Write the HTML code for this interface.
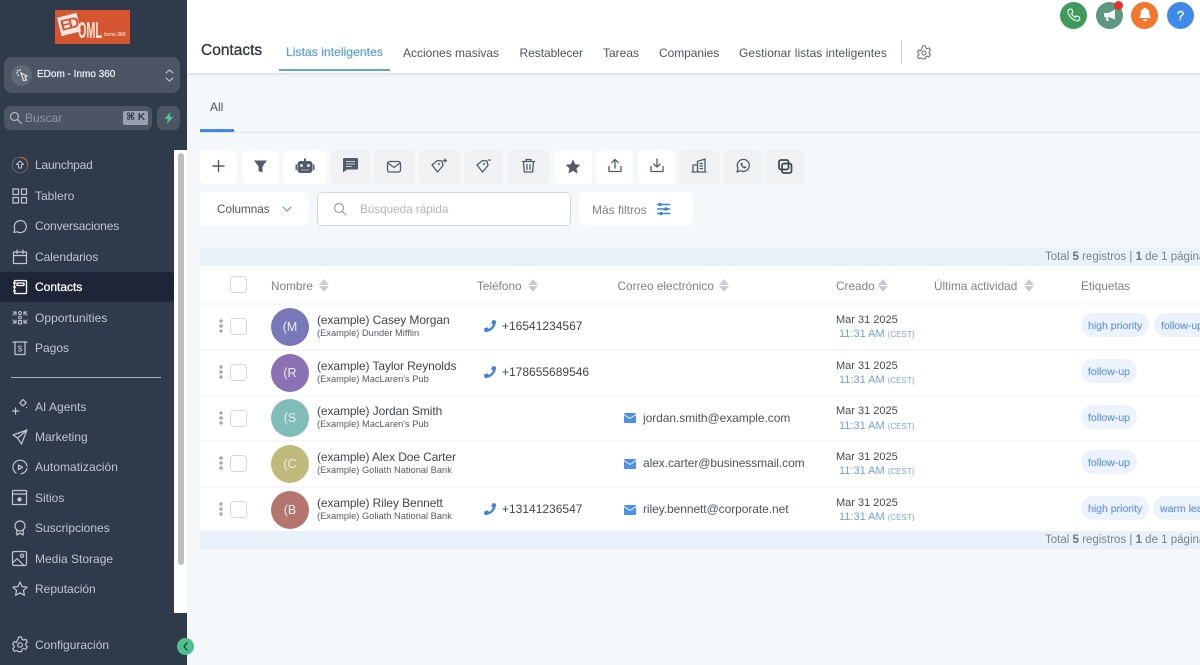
<!DOCTYPE html>
<html lang="es"><head><meta charset="utf-8"><title>Contacts</title>
<style>
*{box-sizing:border-box}
html,body{margin:0;padding:0;width:1200px;height:665px;overflow:hidden;background:#f4f8fb;font-family:"Liberation Sans",sans-serif;color:#374151}
.a{position:absolute;white-space:nowrap}
.nav{position:absolute;left:35px;font-size:12px;line-height:16px;color:#bfc6d0;white-space:nowrap}
svg{position:absolute;overflow:visible}
.si{fill:none;stroke:#bfc6d0;stroke-width:1.2;stroke-linecap:round;stroke-linejoin:round}
.tab{position:absolute;top:45px;font-size:12px;line-height:16px;color:#4b5563;white-space:nowrap}
.tb{position:absolute;top:150px;height:34px;border-radius:5px;background:#fff}
.tb.g{background:#eff1f3}
.tb svg{left:0;top:0}
.ic{fill:none;stroke:#525c68;stroke-width:1.3;stroke-linecap:round;stroke-linejoin:round}
.icf{fill:#525c68;stroke:none}
.row{position:absolute;left:200px;width:1000px;background:#fff;height:44px}
.cb{position:absolute;left:230px;width:17px;height:17px;border:1px solid #d5d9de;border-radius:4px;background:#fff}
.dots{position:absolute;left:219px;width:4px;height:14px;background:radial-gradient(circle at 2px 2px,#a8adb3 1.6px,transparent 2px),radial-gradient(circle at 2px 7px,#a8adb3 1.6px,transparent 2px),radial-gradient(circle at 2px 12px,#a8adb3 1.6px,transparent 2px)}
.av{position:absolute;left:271px;width:38px;height:38px;border-radius:50%;color:#e9ecf2;font-size:12.5px;line-height:38px;text-align:center}
.n{position:absolute;left:317px;font-size:12px;line-height:14px;color:#3f4650;white-space:nowrap;letter-spacing:-.1px}
.c{position:absolute;left:317px;font-size:9.3px;line-height:11px;color:#555c66;white-space:nowrap}
.ph{position:absolute;left:502px;font-size:12px;line-height:14px;color:#3f4650;white-space:nowrap}
.em{position:absolute;left:643px;font-size:12px;line-height:14px;color:#4b5260;white-space:nowrap;letter-spacing:-.07px}
.d{position:absolute;left:836px;font-size:11px;line-height:12px;color:#444b55;white-space:nowrap}
.t{position:absolute;left:839px;font-size:11px;line-height:13px;color:#6fa0e0;white-space:nowrap}
.t small{font-size:8px;color:#7da7df}
.tag{position:absolute;height:24px;border-radius:12px;background:#edf3fc;color:#6a9be0;font-size:10.5px;line-height:26px;padding:0 7px;white-space:nowrap;-webkit-text-stroke:.2px #6a9be0}
.th{position:absolute;top:279px;font-size:11.8px;line-height:14px;color:#7b828c;white-space:nowrap}
.sort{position:absolute;top:279px;width:10px;height:13px}
.sort:before,.sort:after{content:"";position:absolute;left:0;border-left:5px solid transparent;border-right:5px solid transparent}
.sort:before{top:0;border-bottom:6px solid #c9ccd1}
.sort:after{bottom:0;border-top:6px solid #c9ccd1}
.tot{position:absolute;left:1045px;font-size:11.5px;line-height:14px;color:#7b828c;white-space:nowrap}
.tot b{color:#6b7280}
</style></head><body>

<!-- sidebar -->
<div class="a" style="left:0;top:0;width:187px;height:665px;background:#2f3a4b"></div>
<div class="a" style="left:174px;top:150px;width:13px;height:463px;background:#fff"></div>
<div class="a" style="left:178px;top:153px;width:6px;height:412px;background:#bcbfc0;border-radius:3px"></div>

<!-- logo -->
<div class="a" style="left:55px;top:10px;width:75px;height:34px;background:#d4552f;overflow:hidden">
 <div class="a" style="left:4px;top:5px;width:20px;height:19px;background:#f4e8e0;transform:rotate(-14deg);color:#d4552f;font:700 15px/19px 'Liberation Sans';letter-spacing:-2px;text-align:center">ED</div>
 <div class="a" style="left:23px;top:8px;color:#f6e6dc;font:700 23px/24px 'Liberation Sans';transform:scaleX(.47);transform-origin:left">OML</div>
 <div class="a" style="left:49px;top:22px;color:#f1c8b5;font:700 5.5px/7px 'Liberation Sans';letter-spacing:-.3px">Inmo 360</div>
</div>

<!-- account -->
<div class="a" style="left:4px;top:57px;width:176px;height:36px;border-radius:8px;background:#4b5564"></div>
<div class="a" style="left:11px;top:65px;width:21px;height:21px;border-radius:50%;background:#5f6875"></div>
<svg style="left:16px;top:69px" width="12" height="13" viewBox="0 0 12 13"><path d="M5 4l6 3-2 1 1.500 3-3 .5L5 4zM1 1l1.500 1.500M4 0v2M0 4h2M1.500 7L3 5.800" fill="none" stroke="#e8eaee" stroke-width="1.100"/></svg>
<div class="a" style="left:37px;top:67px;font-size:10px;line-height:15px;color:#eceff3;-webkit-text-stroke:.25px #eceff3">EDom - Inmo 360</div>
<svg style="left:164px;top:68px" width="11" height="15" viewBox="0 0 11 15"><path d="M2 5l3.500-3L9 5M2 10l3.500 3L9 10" fill="none" stroke="#c3cad4" stroke-width="1.100" stroke-linecap="round"/></svg>

<!-- search -->
<div class="a" style="left:4px;top:106px;width:148px;height:24px;border-radius:6px;background:#4b5564"></div>
<svg style="left:9px;top:111px" width="14" height="14" viewBox="0 0 14 14"><circle cx="5.500" cy="5.500" r="4" fill="none" stroke="#aab1bb" stroke-width="1.300"/><path d="M8.500 8.500L12.500 12.500" stroke="#aab1bb" stroke-width="1.300" stroke-linecap="round"/></svg>
<div class="a" style="left:25px;top:110px;font-size:12px;line-height:16px;color:#8f97a3">Buscar</div>
<div class="a" style="left:123px;top:111px;width:25px;height:14px;background:#99a1ac;border-radius:2px;color:#2f3a4b;font-size:10px;line-height:14px;text-align:center;font-weight:700;font-family:'Liberation Sans','DejaVu Sans',sans-serif;">⌘ K</div>
<div class="a" style="left:157px;top:106px;width:23px;height:24px;border-radius:6px;background:#4b5564"></div>
<svg style="left:163px;top:112px" width="12" height="12" viewBox="0 0 12 12"><path d="M7.500 0L1.500 7h3.500L3.800 12 10.500 4.800H6.800z" fill="#4fc78f"/></svg>

<!-- nav active -->
<div class="a" style="left:0;top:272px;width:174px;height:30px;background:#1e2536;border-radius:0 4px 4px 0"></div>

<!-- nav icons -->
<svg style="left:11px;top:156px" width="18" height="18" viewBox="0 0 18 18"><circle cx="9" cy="9" r="7.800" fill="none" stroke="#5e6776" stroke-width="1"/><path d="M9 1.200A7.800 7.800 0 0 1 16.800 9" fill="none" stroke="#c4713f" stroke-width="1"/><path class="si" d="M9 5L5.500 8.500H7.500V12H10.500V8.500H12.500z" style="stroke-width:1"/></svg>
<svg style="left:12px;top:188px" width="16" height="16" viewBox="0 0 16 16"><path class="si" d="M1 1h5.500v5.500H1zM9.500 1H14.500v5.500H9.500zM1 9.500h5.500V15H1zM9.500 9.500H14.500V15H9.500z"/></svg>
<svg style="left:12px;top:218px" width="16" height="16" viewBox="0 0 16 16"><path class="si" d="M2 14.500l.8-3.600A6 6 0 1 1 5.200 13.700z"/></svg>
<svg style="left:12px;top:249px" width="16" height="16" viewBox="0 0 16 16"><path class="si" d="M1.500 3h13v11.500h-13zM1.500 6.500h13M5 1v3.500M11 1v3.500"/></svg>
<svg style="left:12px;top:279px" width="16" height="16" viewBox="0 0 16 16"><path d="M2.500 1.500h11a1 1 0 0 1 1 1v11a1 1 0 0 1-1 1h-11zM5 4h7v2.500H5zM1 4h3M1 8h3M1 12h3" fill="none" stroke="#fff" stroke-width="1.300" stroke-linejoin="round"/></svg>
<svg style="left:11px;top:310px" width="18" height="15" viewBox="0 0 18 15"><path class="si" d="M2 2h3v3M5 2L2 5M16 2h-3v3M13 2l3 3M2 13h3v-3M2 10l3 3M16 13h-3v-3M16 10l-3 3M9 1.500a1.500 1.500 0 1 1-.01 0M9 6a1.500 1.500 0 1 1-.01 0M7.500 10.500h3v3.500h-3z" style="stroke-width:1.100"/></svg>
<svg style="left:12px;top:340px" width="16" height="16" viewBox="0 0 16 16"><path class="si" d="M1 2h14M3 2v12.500h10V2"/><text x="8" y="11.500" font-size="8" text-anchor="middle" fill="#c3cad4" font-family="Liberation Sans">$</text></svg>
<svg style="left:11px;top:398px" width="18" height="18" viewBox="0 0 18 18"><path class="si" d="M12 1.500l3.200 3.300L12 8 8.800 4.800zM1.500 13h6M4.500 10v6M15.500 9.500l.01 0"/></svg>
<svg style="left:12px;top:429px" width="16" height="16" viewBox="0 0 16 16"><path class="si" d="M15 1L1 6l4.500 3L9.500 15zM15 1L5.500 9"/></svg>
<svg style="left:12px;top:459px" width="16" height="16" viewBox="0 0 16 16"><path class="si" d="M4 14A7 7 0 0 1 8 1.200a7 7 0 0 1 7 5.800M15 9.500a7 7 0 0 1-6 5.300M6.500 6l4 2.300-4 2.300z"/></svg>
<svg style="left:12px;top:490px" width="15" height="15" viewBox="0 0 15 15"><path class="si" d="M.5.500h14v14H.5zM.5 4h14"/><circle cx="7.500" cy="9.500" r="2.200" fill="#c3cad4"/></svg>
<svg style="left:12px;top:520px" width="16" height="16" viewBox="0 0 16 16"><circle class="si" cx="8" cy="6" r="5"/><path class="si" d="M4.800 10v5l3.200-1.800L11.200 15v-5"/></svg>
<svg style="left:12px;top:551px" width="15" height="15" viewBox="0 0 15 15"><path class="si" d="M2 .5h11a1.500 1.500 0 0 1 1.500 1.500v11a1.500 1.500 0 0 1-1.500 1.500H2A1.500 1.500 0 0 1 .5 13V2A1.500 1.500 0 0 1 2 .5zM.5 12L5 7.500 12 14.500"/><circle class="si" cx="10" cy="4.800" r="1.600"/></svg>
<svg style="left:12px;top:581px" width="16" height="16" viewBox="0 0 16 16"><path class="si" d="M8 1l2.100 4.600 5 .5-3.700 3.300 1 4.900L8 11.900l-4.400 2.400 1-4.900L.9 6.100l5-.5z"/></svg>
<svg style="left:11px;top:636px" width="18" height="18" viewBox="0 0 18 18"><path class="si" d="M7.500 1h3l.5 2.200 1.700.9 2.100-.8 1.500 2.600-1.600 1.500v1.800l1.600 1.500-1.500 2.600-2.100-.8-1.700.9-.5 2.200h-3L7 15.400l-1.700-.9-2.100.8-1.500-2.600 1.600-1.500V10L1.700 8.300l1.500-2.600 2.100.8L7 3.200z"/><circle class="si" cx="9" cy="9" r="2.300"/></svg>

<div class="nav" style="top:157px;letter-spacing:-.2px">Launchpad</div>
<div class="nav" style="top:188px">Tablero</div>
<div class="nav" style="top:218px;letter-spacing:-.14px">Conversaciones</div>
<div class="nav" style="top:249px;letter-spacing:-.08px">Calendarios</div>
<div class="nav" style="top:279px;color:#fff;-webkit-text-stroke:.25px #fff">Contacts</div>
<div class="nav" style="top:310px;letter-spacing:.08px">Opportunities</div>
<div class="nav" style="top:340px">Pagos</div>
<div class="a" style="left:11px;top:377px;width:150px;height:1px;background:#aab2bd"></div>
<div class="nav" style="top:399px">AI Agents</div>
<div class="nav" style="top:429px">Marketing</div>
<div class="nav" style="top:459px;letter-spacing:.07px">Automatización</div>
<div class="nav" style="top:490px">Sitios</div>
<div class="nav" style="top:520px">Suscripciones</div>
<div class="nav" style="top:551px">Media Storage</div>
<div class="nav" style="top:581px">Reputación</div>
<div class="nav" style="top:637px">Configuración</div>
<div class="a" style="left:177px;top:638px;width:17px;height:17px;border-radius:50%;background:#4fc08d"></div>
<svg style="left:182px;top:642px" width="7" height="9" viewBox="0 0 7 9"><path d="M5 1L2 4.500 5 8" fill="none" stroke="#1f4a3a" stroke-width="1.400" stroke-linecap="round"/></svg>

<!-- header -->
<div class="a" style="left:187px;top:0;width:1013px;height:73px;background:#fff;box-shadow:0 1px 3px rgba(60,70,90,.18)"></div>
<div class="a" style="left:201px;top:42px;font-size:15.5px;line-height:18px;color:#2f3640;-webkit-text-stroke:.3px #2f3640">Contacts</div>
<div class="tab" style="left:286px;top:44px;color:#5f9fd6;letter-spacing:.08px;-webkit-text-stroke:.25px #5f9fd6">Listas inteligentes</div>
<div class="a" style="left:279px;top:69px;width:111px;height:2px;background:#6ba3cf"></div>
<div class="tab" style="left:403px">Acciones masivas</div>
<div class="tab" style="left:519.500px;letter-spacing:-.05px">Restablecer</div>
<div class="tab" style="left:603px">Tareas</div>
<div class="tab" style="left:659px;letter-spacing:-.05px">Companies</div>
<div class="tab" style="left:739px;letter-spacing:.04px">Gestionar listas inteligentes</div>
<div class="a" style="left:901px;top:40px;width:1px;height:24px;background:#cfd3d8"></div>
<svg style="left:916px;top:45px" width="16" height="16" viewBox="0 0 18 18"><path d="M7.500 1h3l.5 2.200 1.700.9 2.100-.8 1.500 2.600-1.600 1.500v1.800l1.600 1.500-1.500 2.600-2.100-.8-1.700.9-.5 2.200h-3L7 15.400l-1.700-.9-2.100.8-1.500-2.600 1.600-1.500V10L1.700 8.300l1.500-2.600 2.100.8L7 3.200z" fill="none" stroke="#6b7280" stroke-width="1.200" stroke-linejoin="round"/><circle cx="9" cy="9" r="2.300" fill="none" stroke="#6b7280" stroke-width="1.200"/></svg>

<!-- top buttons -->
<div class="a" style="left:1060px;top:2px;width:27px;height:27px;border-radius:50%;background:#3f9a5b"></div>
<svg style="left:1067px;top:8px" width="14" height="14" viewBox="0 0 14 14"><path d="M2.500 1L5 1.500l.8 3-1.300 1c.7 1.600 2 2.900 3.800 3.800l1-1.300 3 .8.500 2.500c-.3 1-1.500 1.700-2.500 1.500C5.500 12 2 8.500 1 4 .8 2.800 1.500 1.500 2.500 1z" fill="none" stroke="#e8f5ec" stroke-width="1.200" stroke-linejoin="round"/></svg>
<div class="a" style="left:1096px;top:2px;width:27px;height:27px;border-radius:50%;background:#5e9883"></div>
<svg style="left:1103px;top:8px" width="14" height="14" viewBox="0 0 14 14"><path d="M1 5h4.500L12 1.500v10L5.500 9H5l.8 4H3.500L2.800 9H1z" fill="#f3f7f5"/></svg>
<div class="a" style="left:1114px;top:1px;width:9px;height:9px;border-radius:50%;background:#e5322d"></div>
<div class="a" style="left:1131px;top:2px;width:27px;height:27px;border-radius:50%;background:#f2762b"></div>
<svg style="left:1138px;top:7px" width="14" height="15" viewBox="0 0 14 15"><path d="M7 .5c.7 0 1 .5 1 1 2.200.5 3.300 2.300 3.300 4.500 0 2.500.7 3.800 1.700 5H1c1-1.200 1.700-2.500 1.700-5C2.700 3.800 3.800 2 6 1.500c0-.5.300-1 1-1zM5 12.300h4a2 2 0 0 1-4 0z" fill="#fff"/></svg>
<div class="a" style="left:1167px;top:2px;width:27px;height:27px;border-radius:50%;background:#3f8ae8;color:#e8f1fd;font-size:13px;line-height:27px;text-align:center;-webkit-text-stroke:.4px #e8f1fd">?</div>

<!-- All tab -->
<div class="a" style="left:210px;top:99px;font-size:12px;line-height:16px;color:#4b5563">All</div>
<div class="a" style="left:200px;top:132px;width:1000px;height:1px;background:#dfe3e7"></div>
<div class="a" style="left:200px;top:129px;width:34px;height:3px;background:#3f8ae8"></div>

<!-- toolbar -->
<div class="tb" style="left:200px;width:37px"><svg width="37" height="34"><path d="M18.500 10.500v11M13 16h11" stroke="#525c68" stroke-width="1.400" stroke-linecap="round"/></svg></div>
<div class="tb" style="left:242px;width:37px"><svg width="37" height="34"><path d="M12 10.500h13l-4.500 6v6l-4-1.500v-4.500z" class="icf"/></svg></div>
<div class="tb" style="left:283px;width:44px"><svg width="44" height="34"><rect x="14.500" y="11" width="15" height="12" rx="3" class="icf"/><rect x="12.500" y="14.500" width="1.500" height="5.500" class="icf"/><rect x="30" y="14.500" width="1.500" height="5.500" class="icf"/><rect x="21" y="8.500" width="2" height="3" class="icf"/><circle cx="18.500" cy="15.500" r="1.400" fill="#fff"/><circle cx="25.500" cy="15.500" r="1.400" fill="#fff"/><path d="M18.500 20h7" stroke="#fff" stroke-dasharray="1 1"/></svg></div>
<div class="tb g" style="left:331px;width:39px"><svg width="39" height="34"><path d="M13 8h13a1 1 0 0 1 1 1v9.500a1 1 0 0 1-1 1H16l-4 3V9a1 1 0 0 1 1-1z" class="icf"/><path d="M15 11.500h9M15 14h9M15 16.500h6" stroke="#eff1f3" stroke-width=".8"/></svg></div>
<div class="tb g" style="left:374px;width:41px"><svg width="41" height="34"><rect x="13.500" y="11.500" width="13" height="10.500" rx="2" class="ic"/><path d="M14 13l6 4.500 6-4.500" class="ic"/></svg></div>
<div class="tb g" style="left:419px;width:41px"><svg width="41" height="34"><path d="M13 15l5.500-4.500 4.500.5 1 4.500-5.500 6.500z" class="ic"/><circle cx="20" cy="14" r="1" class="icf"/><path d="M26 8.500v4M24 10.500h4" stroke="#525c68" stroke-width="1.200"/></svg></div>
<div class="tb g" style="left:464px;width:39px"><svg width="39" height="34"><path d="M13 15l5.500-4.500 4.500.5 1 4.500-5.500 6.500z" class="ic"/><circle cx="20" cy="14" r="1" class="icf"/><path d="M24 10h3" stroke="#525c68" stroke-width="1.200"/></svg></div>
<div class="tb g" style="left:508px;width:41px"><svg width="41" height="34"><path d="M15.500 11.500h10l-.8 10.500h-8.400zM14.500 11.500h12M18 11.500V9.500h5v2M19 14.500v5M22 14.500v5" class="ic"/></svg></div>
<div class="tb" style="left:554px;width:38px"><svg width="38" height="34"><path d="M19 9.500l2.200 4.800 5.200.6-3.900 3.500 1.100 5.100-4.600-2.600-4.600 2.600 1.100-5.100-3.900-3.500 5.200-.6z" class="icf"/></svg></div>
<div class="tb" style="left:596px;width:37px"><svg width="37" height="34"><path d="M19 18V9.500M15.800 12.500L19 9.500l3.200 3M13 16.500v5h12v-5" class="ic"/></svg></div>
<div class="tb" style="left:638px;width:37px"><svg width="37" height="34"><path d="M19 9V17M15.800 14L19 17l3.200-3M13 16.500v5h12v-5" class="ic"/></svg></div>
<div class="tb g" style="left:679px;width:41px"><svg width="41" height="34"><path d="M14 22v-7h4.500v7zM18.500 22V11.500l7.500-2.500v13zM13 22h14M21 13.500h2.500M21 16h2.500M21 18.500h2.500" class="ic"/></svg></div>
<div class="tb g" style="left:724px;width:37px"><svg width="37" height="34"><path d="M13 22l1-3.800a6 6 0 1 1 2.500 2.500z" class="ic"/><path d="M16.500 13.500c0 2.500 2.500 5 5 5l1-1.500-1.700-1-.8.800c-.8-.4-1.500-1-1.800-1.800l.8-.8-1-1.700z" class="icf"/></svg></div>
<div class="tb g" style="left:766px;width:38px"><svg width="38" height="34"><rect x="13" y="10" width="9.500" height="9.500" rx="2" class="ic" style="stroke-width:1.700;stroke:#3f4650"/><rect x="16" y="13.500" width="9.500" height="9.500" rx="2" class="ic" style="stroke-width:1.700;stroke:#3f4650"/></svg></div>

<!-- filter row -->
<div class="a" style="left:200px;top:192px;width:108px;height:34px;background:#fff;border-radius:5px"></div>
<div class="a" style="left:217px;top:203px;font-size:11.7px;line-height:14px;color:#4b5563">Columnas</div>
<svg style="left:282px;top:206px" width="10" height="7" viewBox="0 0 10 7"><path d="M1 1l4 4 4-4" fill="none" stroke="#5f9fd6" stroke-width="1.200" stroke-linecap="round"/></svg>
<div class="a" style="left:317px;top:192px;width:254px;height:34px;background:#fff;border:1px solid #d5d9de;border-radius:5px"></div>
<svg style="left:333px;top:202px" width="14" height="14" viewBox="0 0 14 14"><circle cx="6" cy="6" r="4.500" fill="none" stroke="#9aa1a9" stroke-width="1.200"/><path d="M9.500 9.500L13 13" stroke="#9aa1a9" stroke-width="1.200" stroke-linecap="round"/></svg>
<div class="a" style="left:360px;top:203px;font-size:11.7px;line-height:14px;color:#b1b6bd">Búsqueda rápida</div>
<div class="a" style="left:579px;top:192px;width:114px;height:34px;background:#fff;border-radius:5px"></div>
<div class="a" style="left:592px;top:203px;font-size:12px;line-height:14px;color:#7b828c">Más filtros</div>
<svg style="left:656px;top:202px" width="15" height="14" viewBox="0 0 15 14"><path d="M1 2.500h13M1 7h13M1 11.500h13" stroke="#3f82dc" stroke-width="1.400"/><circle cx="4" cy="2.500" r="1.800" fill="#3f82dc"/><circle cx="10" cy="7" r="1.800" fill="#3f82dc"/><circle cx="5" cy="11.500" r="1.800" fill="#3f82dc"/></svg>

<!-- table -->
<div class="a" style="left:200px;top:248px;width:1000px;height:18px;background:#e9f2fb"></div>
<div class="tot" style="top:250px">Total <b>5</b> registros | <b>1</b> de 1 página</div>
<div class="a" style="left:200px;top:266px;width:1000px;height:37px;background:#fff"></div>
<div class="cb" style="top:276px"></div>
<div class="th" style="left:271px">Nombre</div><div class="sort" style="left:319px"></div>
<div class="th" style="left:477px">Teléfono</div><div class="sort" style="left:528px"></div>
<div class="th" style="left:617.500px">Correo electrónico</div><div class="sort" style="left:719px"></div>
<div class="th" style="left:836px">Creado</div><div class="sort" style="left:878px"></div>
<div class="th" style="left:934px">Última actividad</div><div class="sort" style="left:1024px"></div>
<div class="th" style="left:1081px">Etiquetas</div>

<div class="row" style="top:305px"></div>
<div class="row" style="top:351px"></div>
<div class="row" style="top:396px"></div>
<div class="row" style="top:442px"></div>
<div class="row" style="top:488px"></div>

<div class="dots" style="top:319px"></div><div class="cb" style="top:318px"></div>
<div class="dots" style="top:365px"></div><div class="cb" style="top:364px"></div>
<div class="dots" style="top:411px"></div><div class="cb" style="top:410px"></div>
<div class="dots" style="top:456px"></div><div class="cb" style="top:455px"></div>
<div class="dots" style="top:502px"></div><div class="cb" style="top:501px"></div>

<div class="av" style="top:308px;background:#7878bb">(M</div>
<div class="av" style="top:354px;background:#8a72b4">(R</div>
<div class="av" style="top:399px;background:#80bdb8">(S</div>
<div class="av" style="top:445px;background:#bfba7a">(C</div>
<div class="av" style="top:491px;background:#b5766f">(B</div>

<div class="n" style="top:313px">(example) Casey Morgan</div><div class="c" style="top:328px">(Example) Dunder Mifflin</div>
<div class="n" style="top:359px">(example) Taylor Reynolds</div><div class="c" style="top:374px">(Example) MacLaren's Pub</div>
<div class="n" style="top:404px">(example) Jordan Smith</div><div class="c" style="top:419px">(Example) MacLaren's Pub</div>
<div class="n" style="top:450px">(example) Alex Doe Carter</div><div class="c" style="top:465px">(Example) Goliath National Bank</div>
<div class="n" style="top:496px">(example) Riley Bennett</div><div class="c" style="top:511px">(Example) Goliath National Bank</div>

<svg style="left:484px;top:320px" width="12" height="12" viewBox="0 0 512 512"><path transform="matrix(-1 0 0 1 512 0)" d="M497.39 361.8l-112-48a24 24 0 0 0-28 6.900l-49.600 60.600A370.660 370.660 0 0 1 130.600 204.110l60.600-49.600a23.940 23.940 0 0 0 6.900-28l-48-112A24.160 24.160 0 0 0 122.600.610l-104 24A24 24 0 0 0 0 48c0 256.500 207.900 464 464 464a24 24 0 0 0 23.400-18.600l24-104a24.290 24.290 0 0 0-14.010-27.600z" fill="#3f82dc"/></svg>
<svg style="left:484px;top:366px" width="12" height="12" viewBox="0 0 512 512"><path transform="matrix(-1 0 0 1 512 0)" d="M497.39 361.8l-112-48a24 24 0 0 0-28 6.900l-49.600 60.600A370.660 370.660 0 0 1 130.600 204.110l60.600-49.600a23.940 23.940 0 0 0 6.900-28l-48-112A24.160 24.160 0 0 0 122.600.610l-104 24A24 24 0 0 0 0 48c0 256.500 207.900 464 464 464a24 24 0 0 0 23.400-18.600l24-104a24.290 24.290 0 0 0-14.010-27.600z" fill="#3f82dc"/></svg>
<svg style="left:484px;top:503px" width="12" height="12" viewBox="0 0 512 512"><path transform="matrix(-1 0 0 1 512 0)" d="M497.39 361.8l-112-48a24 24 0 0 0-28 6.900l-49.600 60.600A370.660 370.660 0 0 1 130.600 204.110l60.600-49.600a23.940 23.940 0 0 0 6.900-28l-48-112A24.160 24.160 0 0 0 122.600.610l-104 24A24 24 0 0 0 0 48c0 256.500 207.900 464 464 464a24 24 0 0 0 23.400-18.600l24-104a24.290 24.290 0 0 0-14.010-27.600z" fill="#3f82dc"/></svg>
<div class="ph" style="top:319px">+16541234567</div>
<div class="ph" style="top:365px">+178655689546</div>
<div class="ph" style="top:502px">+13141236547</div>

<svg style="left:624px;top:413px" width="12" height="10" viewBox="0 0 12 10"><rect width="12" height="10" rx="1" fill="#4d8fe6"/><path d="M0 1.500l6 4 6-4" fill="none" stroke="#fff" stroke-width=".9"/></svg>
<svg style="left:624px;top:459px" width="12" height="10" viewBox="0 0 12 10"><rect width="12" height="10" rx="1" fill="#4d8fe6"/><path d="M0 1.500l6 4 6-4" fill="none" stroke="#fff" stroke-width=".9"/></svg>
<svg style="left:624px;top:505px" width="12" height="10" viewBox="0 0 12 10"><rect width="12" height="10" rx="1" fill="#4d8fe6"/><path d="M0 1.500l6 4 6-4" fill="none" stroke="#fff" stroke-width=".9"/></svg>
<div class="em" style="top:411px">jordan.smith@example.com</div>
<div class="em" style="top:456px">alex.carter@businessmail.com</div>
<div class="em" style="top:502px">riley.bennett@corporate.net</div>

<div class="d" style="top:314px">Mar 31 2025</div><div class="t" style="top:328px">11:31 AM <small>(CEST)</small></div>
<div class="d" style="top:360px">Mar 31 2025</div><div class="t" style="top:374px">11:31 AM <small>(CEST)</small></div>
<div class="d" style="top:405px">Mar 31 2025</div><div class="t" style="top:420px">11:31 AM <small>(CEST)</small></div>
<div class="d" style="top:451px">Mar 31 2025</div><div class="t" style="top:465px">11:31 AM <small>(CEST)</small></div>
<div class="d" style="top:497px">Mar 31 2025</div><div class="t" style="top:511px">11:31 AM <small>(CEST)</small></div>

<div class="tag" style="left:1081px;top:313px">high priority</div><div class="tag" style="left:1154px;top:313px">follow-up</div>
<div class="tag" style="left:1081px;top:359px">follow-up</div>
<div class="tag" style="left:1081px;top:405px">follow-up</div>
<div class="tag" style="left:1081px;top:450px">follow-up</div>
<div class="tag" style="left:1081px;top:496px">high priority</div><div class="tag" style="left:1153px;top:496px">warm lead</div>

<div class="a" style="left:200px;top:531px;width:1000px;height:18px;background:#e9f2fb"></div>
<div class="tot" style="top:533px">Total <b>5</b> registros | <b>1</b> de 1 página</div>
</body></html>
